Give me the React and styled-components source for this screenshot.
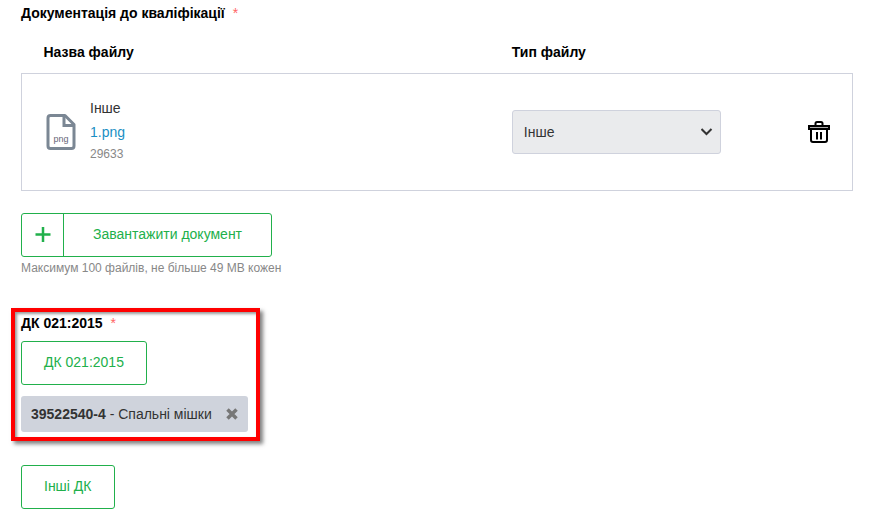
import React, { useState } from 'react';
import styled, { createGlobalStyle } from 'styled-components';

const GlobalStyle = createGlobalStyle`
  :root {
    --color-green: #21b04b;
    --color-border: #cfd2dd;
    --color-text: #333;
    --color-muted: #888;
    --color-link: #1a8fc4;
  }

  *,
  *::before,
  *::after {
    box-sizing: border-box;
  }

  body {
    background: #fff;
    color: var(--color-text);
    font: 14px/20px 'Liberation Sans', Arial, sans-serif;
    margin: 0;
  }

  button,
  select {
    color: inherit;
    font: inherit;
  }
`;

const Page = styled.main`
  padding: 3px 19px 16px 21px;
`;

const Heading = styled.h2`
  color: #000;
  font-size: 14px;
  line-height: 20px;
  margin: 0;
`;

const Required = styled.span`
  color: #f66;
  font-size: 14px;
  font-weight: 400;
  margin-left: 8px;
`;

const FileTable = styled.table`
  border-collapse: collapse;
  margin-top: 9px;
  table-layout: fixed;
  width: 100%;

  th {
    color: #000;
    height: 41px;
    padding: 0;
    text-align: left;
  }

  th:first-child,
  td:first-child {
    padding-left: 22px;
    width: 59%;
  }

  td {
    height: 117px;
    padding: 0;
  }

  td:last-child {
    padding-right: 21px;
    text-align: right;
  }

  tbody tr {
    border: 1px solid var(--color-border);
  }
`;

const FileInfo = styled.div`
  align-items: center;
  display: flex;
  gap: 12px;
`;

const FileIcon = styled.svg`
  display: block;
  flex: none;
  margin-left: 2px;
`;

const FileText = styled.div`
  display: flex;
  flex-direction: column;
  line-height: 24px;
  padding-bottom: 4px;
`;

const FileLink = styled.a`
  color: var(--color-link);
  text-decoration: none;
`;

const FileSize = styled.span`
  color: var(--color-muted);
  font-size: 12px;
  line-height: 20px;
`;

const SelectBox = styled.div`
  position: relative;
  width: 209px;

  svg {
    pointer-events: none;
    position: absolute;
    right: 8px;
    top: 16px;
  }
`;

const Select = styled.select`
  appearance: none;
  background: #eaebed;
  border: 1px solid var(--color-border);
  border-radius: 3px;
  display: block;
  height: 44px;
  padding: 0 32px 0 11px;
  width: 100%;
`;

const IconButton = styled.button`
  background: none;
  border: 0;
  cursor: pointer;
  display: inline-flex;
  padding: 0;
  vertical-align: middle;
`;

const Button = styled.button`
  align-items: stretch;
  background: #fff;
  border: 1px solid var(--color-green);
  border-radius: 3px;
  color: var(--color-green);
  cursor: pointer;
  display: flex;
  height: 44px;
  line-height: 40px;
  padding: 0;
`;

const ButtonIcon = styled.span`
  align-items: center;
  border-right: 1px solid var(--color-green);
  display: flex;
  justify-content: center;
  width: 42px;
`;

const ButtonLabel = styled.span`
  padding: 0 ${({ $wide }) => ($wide ? 29 : 22)}px;
`;

const Upload = styled.div`
  margin-top: 22px;
`;

const Hint = styled.p`
  color: var(--color-muted);
  font-size: 12px;
  line-height: 20px;
  margin: 1px 0 0;
`;

const Highlight = styled.section`
  border: 4px solid #f00;
  box-shadow: 3px 3px 4px rgba(0, 0, 0, 0.5),
    inset 2px 2px 3px rgba(0, 0, 0, 0.4);
  margin: 30px 0 24px -10px;
  padding: 1px 8px 5px 6px;
  width: fit-content;
`;

const Classifier = styled.div`
  display: flex;
  flex-direction: column;
  align-items: flex-start;
  gap: 11px;
  margin-top: 8px;
`;

const Tag = styled.div`
  align-items: center;
  background: #cfd3dc;
  border-radius: 3px;
  display: flex;
  gap: 14px;
  height: 36px;
  padding: 0 10px;
`;

const RequiredMark = () => <Required aria-hidden="true">*</Required>;

const App = () => {
  const [type, setType] = useState('other');

  return (
    <Page>
      <GlobalStyle />
      <Heading>
        Документація до кваліфікації
        <RequiredMark />
      </Heading>

      <FileTable>
        <thead>
          <tr>
            <th scope="col">Назва файлу</th>
            <th scope="col" colSpan="2">
              Тип файлу
            </th>
          </tr>
        </thead>
        <tbody>
          <tr>
            <td>
              <FileInfo>
                <FileIcon width="32" height="38" viewBox="0 0 32 38">
                  <path
                    d="M19 2.500H4.500Q2 2.500 2 5V33Q2 35.500 4.500 35.500H25.500Q28 35.500 28 33V11.500Z"
                    fill="none"
                    stroke="#7b8794"
                    strokeWidth="3"
                    strokeLinejoin="round"
                  />
                  <path
                    d="M18 3V12.500H28"
                    fill="none"
                    stroke="#7b8794"
                    strokeWidth="3"
                  />
                  <text
                    x="15"
                    y="29"
                    fill="#667"
                    fontSize="9"
                    textAnchor="middle"
                  >
                    png
                  </text>
                </FileIcon>
                <FileText>
                  <span>Інше</span>
                  <FileLink href="#file">1.png</FileLink>
                  <FileSize>29633</FileSize>
                </FileText>
              </FileInfo>
            </td>
            <td>
              <SelectBox>
                <Select
                  aria-label="Тип файлу"
                  value={type}
                  onChange={(e) => setType(e.target.value)}
                >
                  <option value="other">Інше</option>
                </Select>
                <svg width="12" height="12" viewBox="0 0 12 12">
                  <path
                    d="M0.500 3L5.500 8L10.500 3"
                    fill="none"
                    stroke="#333"
                    strokeWidth="2"
                  />
                </svg>
              </SelectBox>
            </td>
            <td>
              <IconButton type="button" aria-label="Видалити">
                <svg width="24" height="24" viewBox="0 0 24 24">
                  <path d="M2 6H22V9H2Z" fill="#aaa" />
                  <path
                    d="M2 6H22V9H2ZM8.500 6V3.500Q8.500 2 10 2H14Q15.500 2 15.500 3.500V6M4 10V20Q4 22 6 22H18Q20 22 20 20V10"
                    fill="none"
                    stroke="#000"
                    strokeWidth="2"
                  />
                  <path
                    d="M10 12V19.500M14 12V19.500"
                    fill="none"
                    stroke="#000"
                    strokeWidth="2"
                  />
                </svg>
              </IconButton>
            </td>
          </tr>
        </tbody>
      </FileTable>

      <Upload>
        <Button type="button">
          <ButtonIcon>
            <svg width="16" height="16" viewBox="0 0 16 16">
              <path
                d="M8 0V15M0.500 7.500H15.500"
                stroke="#21b04b"
                strokeWidth="2.500"
              />
            </svg>
          </ButtonIcon>
          <ButtonLabel $wide>Завантажити документ</ButtonLabel>
        </Button>
        <Hint>Максимум 100 файлів, не більше 49 MB кожен</Hint>
      </Upload>

      <Highlight>
        <Heading>
          ДК 021:2015
          <RequiredMark />
        </Heading>
        <Classifier>
          <Button type="button">
            <ButtonLabel>ДК 021:2015</ButtonLabel>
          </Button>
          <Tag>
            <span>
              <b>39522540-4</b> - Спальні мішки
            </span>
            <IconButton type="button" aria-label="Прибрати">
              <svg width="12" height="12" viewBox="0 0 12 12">
                <path
                  d="M1.500 1.500L10.500 10.500M10.500 1.500L1.500 10.500"
                  stroke="#777"
                  strokeWidth="3.500"
                />
              </svg>
            </IconButton>
          </Tag>
        </Classifier>
      </Highlight>

      <Button type="button">
        <ButtonLabel>Інші ДК</ButtonLabel>
      </Button>
    </Page>
  );
};

export default App;
